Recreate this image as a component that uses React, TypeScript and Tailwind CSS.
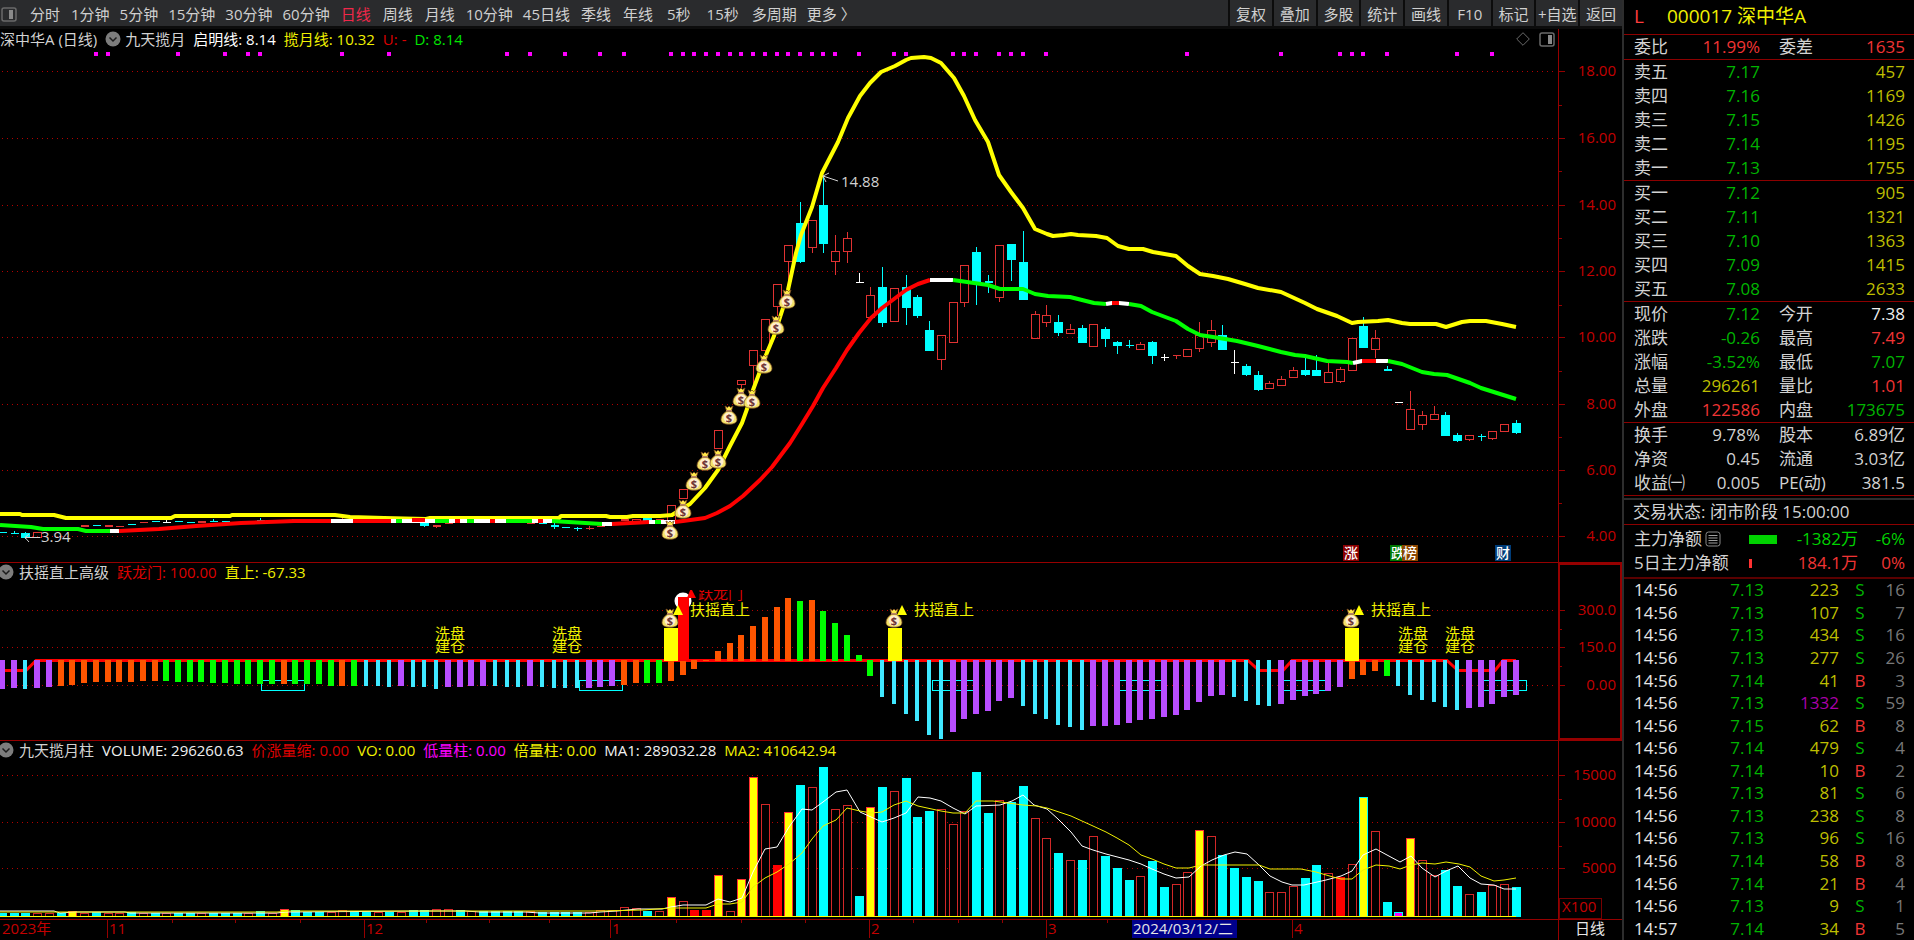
import type { ReactNode } from "react";

const STEP = 11.735;
const barX = (i: number) => Math.round(2 + i * STEP);

const periods = [
    "分时", "1分钟", "5分钟", "15分钟", "30分钟", "60分钟", "日线", "周线", "月线",
    "10分钟", "45日线", "季线", "年线", "5秒", "15秒", "多周期", "更多 〉",
];

const tools = ["复权", "叠加", "多股", "统计", "画线", "F10", "标记", "+自选", "返回"];

// kind: r = rising (hollow), c = falling (filled), w = unchanged
type Candle = [i: number, kind: string, top: number, bottom: number, high?: number, low?: number];

const candles: Candle[] = [
    [0, "c", 532, 533], [1, "c", 533, 534, 531], [2, "c", 533, 537, 532, 539], [3, "r", 532, 537],
    [6, "r", 527, 528], [7, "r", 525, 527], [8, "c", 525, 526], [9, "r", 525, 527], [10, "r", 526, 527],
    [11, "c", 524, 525], [12, "r", 522, 523], [13, "c", 521, 522], [14, "w", 522, 522, 519], [15, "c", 521, 522],
    [16, "c", 522, 523], [17, "r", 521, 523], [18, "c", 521, 522, 519], [19, "c", 521, 522], [22, "c", 520, 521, 518],
    [24, "r", 520, 521], [25, "c", 519, 520], [29, "r", 519, 520, 518], [36, "c", 522, 525, 521, 527],
    [37, "r", 525, 527, 525, 528], [38, "r", 523, 524], [45, "r", 523, 524], [46, "c", 523, 524], [47, "c", 525, 527, 523, 529],
    [48, "c", 527, 528], [49, "c", 528, 529, 527, 531], [50, "r", 528, 529, 526, 530], [51, "r", 526, 527],
    [52, "r", 522, 524], [53, "r", 519, 521], [54, "r", 519, 522], [55, "c", 518, 521], [56, "r", 519, 521],
    [57, "r", 505, 523], [58, "r", 489, 498], [61, "r", 430, 448], [63, "r", 380, 384, 380, 388],
    [64, "r", 350, 365, 350, 390], [65, "r", 319, 350, 319, 354], [66, "r", 284, 306, 284, 316],
    [67, "r", 245, 261, 245, 290], [68, "c", 223, 261, 202, 263], [69, "r", 220, 247, 220, 253],
    [70, "c", 205, 243, 177, 253], [71, "r", 251, 261, 235, 275], [72, "r", 238, 251, 232, 263],
    [73, "w", 282, 282, 273], [74, "r", 295, 317, 287], [75, "c", 287, 322, 267, 327], [76, "r", 288, 321],
    [77, "c", 287, 307, 275, 325], [78, "c", 297, 315, 295, 318], [79, "c", 330, 350, 321],
    [80, "r", 335, 359, 335, 370], [81, "r", 302, 342, 302, 343], [82, "r", 265, 302, 265, 307],
    [83, "c", 252, 281, 247, 305], [84, "c", 281, 283, 275, 293], [85, "r", 245, 297, 245, 302],
    [86, "c", 244, 259, 244, 281], [87, "c", 262, 299, 231], [88, "r", 314, 338, 311], [89, "r", 315, 322, 305, 327],
    [90, "c", 322, 332, 315, 336], [91, "r", 329, 333, 324], [92, "c", 328, 342, 325], [93, "r", 324, 346, 324, 347],
    [94, "c", 329, 338, 327, 347], [95, "c", 342, 345, 341, 354], [96, "c", 345, 346, 340, 348],
    [97, "r", 344, 349, 342], [98, "c", 342, 355, 341, 364], [99, "w", 357, 357, 354, 361], [100, "r", 355, 356, 355, 359],
    [101, "r", 349, 356], [102, "r", 335, 348, 322, 352], [103, "r", 330, 342, 320, 347], [104, "c", 335, 349, 325],
    [105, "w", 362, 362, 350, 374], [106, "c", 366, 374, 364, 376], [107, "c", 375, 389, 371, 391],
    [108, "r", 383, 388, 381], [109, "r", 379, 385, 376], [110, "r", 370, 377, 367], [111, "c", 370, 374, 358, 376],
    [112, "c", 370, 375, 355, 376], [113, "r", 372, 382, 363, 383], [114, "r", 369, 381, 367, 383], [115, "r", 338, 370],
    [116, "c", 326, 347, 317], [117, "r", 338, 349, 330, 358], [118, "c", 369, 371, 366], [119, "w", 402, 402],
    [120, "r", 409, 429, 391], [121, "r", 415, 424, 411, 430], [122, "r", 414, 419, 406], [123, "c", 415, 435, 412, 436],
    [124, "c", 435, 440, 433, 442], [125, "r", 435, 439, 435, 441], [126, "c", 436, 437, 434, 441],
    [127, "r", 431, 438, 431, 440], [128, "r", 424, 431, 424, 432], [129, "c", 423, 432, 420, 434],
];

const upperLine =
    "0,514 20,514 22,515 54,515 66,518 171,518 175,516 230,516 232,515 335,515 350,517 384,518 426,519 430,518 559,518 561,516 606,516 610,517 627,517 633,516 660,516 672,515 683,508 690,504 705,488 718,470 725,456 730,446 742,423 747,409 753,390 766,355 774,336 783,308 788,290 796,253 801,235 812,207 822,173 838,142 848,118 860,96 870,83 881,72 895,66 906,60 911,58 924,57 931,58 941,63 954,78 964,96 975,120 988,142 999,175 1011,192 1023,208 1035,229 1047,234 1053,236 1064,235 1071,234 1078,235 1096,236 1107,238 1118,246 1129,249 1143,249 1153,252 1176,256 1188,266 1200,274 1213,276 1228,279 1245,284 1258,288 1281,292 1305,303 1317,309 1337,316 1352,323 1358,322 1378,321 1388,320 1402,323 1410,324 1436,324 1446,327 1462,322 1470,321 1486,321 1502,324 1516,327";

const trend: [string, string][] = [
    ["#00ff00", "0,525 31,527 43,529 78,529 86,531 110,531"],
    ["#ffffff", "110,531 119,531"],
    ["#ff0000", "119,531 159,529 196,526 241,523 294,521 331,521"],
    ["#ffffff", "331,521 353,521"],
    ["#ff0000", "353,521 391,521"],
    ["#ffffff", "391,521 552,521"],
    ["#00ff00", "396,521 402,521"],
    ["#ff0000", "412,520 425,520"],
    ["#00ff00", "435,521 449,521"],
    ["#ff0000", "455,521 460,521"],
    ["#00ff00", "467,521 474,521"],
    ["#ff0000", "490,521 495,521"],
    ["#00ff00", "506,521 532,521"],
    ["#ff0000", "538,521 543,521"],
    ["#00ff00", "552,521 602,524"],
    ["#ffffff", "602,524 612,524"],
    ["#ff0000", "612,524 649,522"],
    ["#ffffff", "649,522 675,522"],
    ["#00ff00", "655,522 661,522"],
    ["#ff0000", "675,522 683,521 705,518 717,513 730,506 743,496 760,480 772,467 790,443 802,424 813,406 823,388 836,368 847,350 859,333 871,318 882,308 894,299 906,290 918,284 930,280"],
    ["#ffffff", "930,280 953,280"],
    ["#00ff00", "953,280 967,282 988,285 1000,289 1023,289 1035,294 1048,296 1070,297 1094,303 1106,304"],
    ["#ffffff", "1106,304 1112,303 1119,303 1129,304"],
    ["#ff0000", "1112,303 1119,303"],
    ["#00ff00", "1129,304 1141,306 1152,312 1176,321 1188,329 1200,335 1213,337 1237,341 1258,346 1281,352 1295,355 1305,356 1327,361 1347,362 1353,363"],
    ["#ffffff", "1353,363 1362,361 1388,361"],
    ["#ff0000", "1362,361 1376,361"],
    ["#00ff00", "1388,361 1402,364 1422,372 1434,374 1447,375 1470,383 1481,388 1516,399"],
];

const signalDots = [
    8, 9, 15, 19, 21, 22, 29, 33, 43, 45, 48, 51, 53, 57, 58, 59, 60, 61, 62, 63, 64, 65, 66, 67, 68, 69, 70, 71,
    73, 76, 77, 81, 82, 83, 85, 86, 87, 89, 101, 109, 114, 115, 116, 118, 124, 127,
];

const bags: [number, number][] = [
    [670, 530], [683, 509], [694, 481], [705, 461], [718, 459], [729, 415], [741, 397], [752, 399], [764, 364], [776, 325], [787, 299],
];

const badges: [number, string, string][] = [
    [1343, "涨", "#8b0000"], [1390, "跌", "#007800"], [1402, "榜", "#8c4600"], [1495, "财", "#003c78"],
];

// one entry per bar: colour letter + y of the free end
const momentum =
    "P689 P688 C689 P688 P687 O686 O685 O683 O682 O682 O682 O682 O681 O681 G681 G682 G682 G682 G683 G683 G684 G684 G684 G684 O684 G684 G684 G684 G686 O686 G686 C686 C686 C687 P686 C687 C687 C689 P687 P687 P686 P686 C686 C687 C687 P686 C687 C688 C688 C688 P688 P687 P686 O685 O683 G683 G683 O681 O675 O669 O660 O651 O643 O635 O626 O617 O607 O598 G601 O600 G611 G623 G635 G655 G676 C697 C704 C714 C721 C735 C739 P732 P719 P714 P711 P701 P698 C706 C714 C719 C725 C727 C730 P726 P726 P725 P723 P720 P719 P717 P715 P710 P702 P696 P695 C697 C701 C705 C706 P704 P700 P696 P694 P691 P687 O679 O675 O671 G676 C686 C695 C700 C702 C707 C710 P708 P707 P704 P697 P695".split(" ");

const momentumColor: Record<string, string> = { P: "#b84dff", C: "#40e8ff", O: "#ff5500", G: "#00ff00" };

const volumes =
    "C913 C913 C913 H913 H913 C913 Y911 H913 C912 H913 H913 C912 H913 C913 H913 C913 C913 H913 C913 C913 C913 H913 C911 H913 Y909 C910 C912 C912 H912 H910 C912 C912 H912 C912 H912 C910 C910 H909 H909 C910 H911 C911 C911 C911 C911 H911 C912 C912 C912 C912 H912 H910 H910 H907 H908 C911 H911 Y897 H901 R910 R910 Y875 H911 Y879 Y777 H804 R865 Y812 C785 H787 C767 H809 H805 C896 Y807 C787 H791 C778 C817 C811 H809 H824 H811 C772 C813 H800 C802 C786 H818 H838 C853 H860 C860 H836 C856 C868 C880 H876 C861 C887 H884 H872 Y830 H836 C855 C868 C877 C881 H892 H892 H886 C878 C865 H873 R877 H864 Z797 H831 C902 M912 Y838 H860 H875 C870 C886 H894 C892 H885 H884 C887".split(" ");

const volumeStyle: Record<string, [string, string]> = {
    C: ["#00ffff", "#00ffff"],
    H: ["#000000", "#d22828"],
    Y: ["#ffff00", "#ff3232"],
    Z: ["#ffff00", "#00ffff"],
    R: ["#ff0000", "#ff0000"],
    M: ["#ff00ff", "#00ffff"],
};

const ma1 =
    "0,911 54,911 60,913 75,912 100,912 125,912 130,913 277,913 285,912 430,911 465,911 480,912 500,912 525,912 540,913 590,913 600,912 617,911 638,909 662,909 671,907 683,905 706,905 718,899 730,902 742,898 753,872 765,849 777,847 789,827 802,809 812,810 823,802 836,792 847,790 860,812 871,817 882,822 894,818 906,813 918,797 930,798 941,801 953,808 965,814 976,806 1000,805 1012,801 1023,795 1034,805 1047,809 1058,819 1071,832 1082,846 1093,850 1106,854 1129,860 1141,864 1152,869 1164,874 1176,878 1189,877 1201,866 1212,860 1224,855 1235,852 1247,854 1259,865 1270,876 1282,882 1292,885 1304,885 1326,880 1341,876 1352,871 1363,855 1376,849 1387,855 1400,862 1411,856 1422,868 1435,877 1446,871 1458,866 1470,878 1481,884 1494,885 1504,889 1516,889";

const ma2 =
    "0,912 277,912 290,911 600,911 643,910 671,908 706,908 718,904 730,904 742,902 753,887 765,878 777,872 789,864 802,853 812,839 823,826 836,820 847,808 860,811 871,813 882,812 894,805 906,801 918,806 941,811 953,813 965,813 976,801 993,801 1023,805 1037,806 1047,808 1071,816 1093,826 1106,832 1117,838 1129,845 1141,855 1152,859 1164,864 1176,868 1189,868 1201,865 1259,865 1270,869 1301,869 1316,872 1333,877 1341,879 1352,879 1363,870 1376,865 1389,866 1400,869 1411,865 1422,863 1435,864 1446,862 1459,864 1470,867 1481,876 1494,881 1504,880 1516,878";

const GREEN = "text-[#00b400]";
const RED = "text-[#f03434]";
const YELLOW = "text-[#bebe00]";
const WHITE = "text-[#f0f0f0]";
const LIGHT = "text-[#d2d2d2]";

type Quote = [label: string, value: string, tone: string, label2: string, value2: string, tone2: string];

const quoteBlocks: Quote[][] = [
    [["委比", "11.99%", RED, "委差", "1635", RED]],
    [
        ["卖五", "7.17", GREEN, "", "457", YELLOW],
        ["卖四", "7.16", GREEN, "", "1169", YELLOW],
        ["卖三", "7.15", GREEN, "", "1426", YELLOW],
        ["卖二", "7.14", GREEN, "", "1195", YELLOW],
        ["卖一", "7.13", GREEN, "", "1755", YELLOW],
    ],
    [
        ["买一", "7.12", GREEN, "", "905", YELLOW],
        ["买二", "7.11", GREEN, "", "1321", YELLOW],
        ["买三", "7.10", GREEN, "", "1363", YELLOW],
        ["买四", "7.09", GREEN, "", "1415", YELLOW],
        ["买五", "7.08", GREEN, "", "2633", YELLOW],
    ],
    [
        ["现价", "7.12", GREEN, "今开", "7.38", WHITE],
        ["涨跌", "-0.26", GREEN, "最高", "7.49", RED],
        ["涨幅", "-3.52%", GREEN, "最低", "7.07", GREEN],
        ["总量", "296261", YELLOW, "量比", "1.01", RED],
        ["外盘", "122586", RED, "内盘", "173675", GREEN],
    ],
    [
        ["换手", "9.78%", LIGHT, "股本", "6.89亿", LIGHT],
        ["净资", "0.45", LIGHT, "流通", "3.03亿", LIGHT],
        ["收益㈠", "0.005", LIGHT, "PE(动)", "381.5", LIGHT],
    ],
];

const ticks: [string, string, string, string, string][] = [
    ["14:56", "7.13", "223", "S", "16"],
    ["14:56", "7.13", "107", "S", "7"],
    ["14:56", "7.13", "434", "S", "16"],
    ["14:56", "7.13", "277", "S", "26"],
    ["14:56", "7.14", "41", "B", "3"],
    ["14:56", "7.13", "1332", "S", "59"],
    ["14:56", "7.15", "62", "B", "8"],
    ["14:56", "7.14", "479", "S", "4"],
    ["14:56", "7.14", "10", "B", "2"],
    ["14:56", "7.13", "81", "S", "6"],
    ["14:56", "7.13", "238", "S", "8"],
    ["14:56", "7.13", "96", "S", "16"],
    ["14:56", "7.14", "58", "B", "8"],
    ["14:56", "7.14", "21", "B", "4"],
    ["14:56", "7.13", "9", "S", "1"],
    ["14:57", "7.14", "34", "B", "5"],
];

function PanelIcon({ right = false }: { right?: boolean }) {
    return (
        <svg width="16" height="15" viewBox="0 0 16 15" className="shrink-0" aria-hidden="true">
            <rect x="1" y="1" width="14" height="13" rx="2" fill="none" stroke="#6a6a6a" strokeWidth="1.5" />
            <rect x={right ? 9 : 8} y="3" width="4" height="9" fill="#8a8a8a" />
        </svg>
    );
}

function Toolbar() {
    return (
        <header className="flex h-[29px] shrink-0 border-b-[3px] border-[#0c0c0c] bg-[#2a2b2d] text-[15px] leading-none text-[#d0d0d0]">
            <div className="flex flex-1 items-center overflow-hidden pl-px pt-[2px]">
                <PanelIcon />
                <nav className="ml-[7px] flex whitespace-nowrap">
                    {periods.map((p) => (
                        <button
                            key={p}
                            type="button"
                            className={`${p.endsWith("秒") ? "px-2" : p.length === 2 ? "px-[6px]" : "px-[5px]"} ${p === "日线" ? "text-[#f0284a]" : ""}`}>
                            {p}
                        </button>
                    ))}
                </nav>
            </div>
            <div className="grid w-[394px] grid-cols-9">
                {tools.map((t) => (
                    <button key={t} type="button" className="overflow-hidden whitespace-nowrap border-l-2 border-[#0c0c0c] pt-[2px]">
                        {t}
                    </button>
                ))}
            </div>
        </header>
    );
}

function Collapse() {
    return (
        <button type="button" aria-label="指标菜单" className="shrink-0">
            <svg width="16" height="16" viewBox="0 0 16 16" aria-hidden="true">
                <circle cx="8" cy="8" r="7.5" fill="#7d7d7d" />
                <path d="M4.5 6.5 L8 10 L11.5 6.5" fill="none" stroke="#1c1c1c" strokeWidth="1.5" />
            </svg>
        </button>
    );
}

// Legend and drawing share one grid cell, so the legend sits on top of the chart
function Panel({ viewBox, legend, children }: { viewBox: string, legend: ReactNode, children: ReactNode }) {
    return (
        <section className="grid min-h-0 grid-cols-1 grid-rows-1">
            <svg viewBox={viewBox} preserveAspectRatio="xMinYMin meet" className="col-start-1 row-start-1 h-full min-h-0 w-full" fontSize="15">
                {children}
            </svg>
            <div className="z-10 col-start-1 row-start-1 flex h-5 items-center gap-2 self-start whitespace-nowrap text-[15px] leading-5">
                {legend}
            </div>
        </section>
    );
}

function Axis({ ys, minor, labels }: { ys: number[], minor: number[], labels: string[] }) {
    return (
        <g>
            {ys.map((y, n) => (
                <g key={y}>
                    <path d={`M2 ${y + 0.5} H1556`} stroke="#b40000" strokeDasharray="1 4" shapeRendering="crispEdges" />
                    <path d={`M1559 ${y + 0.5} h6`} stroke="#960000" shapeRendering="crispEdges" />
                    <text x="1616" y={y + 5} textAnchor="end" fill="#c30000">{labels[n]}</text>
                </g>
            ))}
            {minor.map((y) => (
                <path key={y} d={`M1559 ${y + 0.5} h3`} stroke="#960000" shapeRendering="crispEdges" />
            ))}
        </g>
    );
}

function MoneyBag({ x, y }: { x: number, y: number }) {
    return (
        <g transform={`translate(${x} ${y})`}>
            <path d="M-4 -9 L-1.5 -7.5 L0 -9 L1.5 -7.5 L4 -9 L2.5 -4.5 H-2.5 Z" fill="#ffe94a" stroke="#7a4a20" strokeWidth="0.8" />
            <path d="M-2.5 -3.8 C-6 -1.5 -8 1.5 -8 4.2 C-8 7.8 -5 9.2 0 9.2 C5 9.2 8 7.8 8 4.2 C8 1.5 6 -1.5 2.5 -3.8 Z" fill="#f3e36a" stroke="#7a4a20" strokeWidth="0.8" />
            <ellipse cx="0" cy="2.5" rx="5.5" ry="5.2" fill="#ffeccd" />
            <path d="M-3 -4.2 H3" stroke="#c08a6a" strokeWidth="1.4" />
            <text x="0" y="6.5" textAnchor="middle" fontSize="11" fontWeight="700" fill="#6e3434">$</text>
        </g>
    );
}

function CandleShape({ candle }: { candle: Candle }) {
    const [i, kind, top, bottom, high = top, low = bottom] = candle;
    const x = barX(i);
    const color = kind === "c" ? "#00ffff" : kind === "w" ? "#ffffff" : "#e03232";
    const flat = bottom - top < 3;
    return (
        <g stroke={color} shapeRendering="crispEdges">
            {high < top && <path d={`M${x + 0.5} ${high} V${top}`} />}
            {low > bottom && <path d={`M${x + 0.5} ${bottom} V${low}`} />}
            {flat
                ? <rect x={x - 3} y={top} width="8" height={Math.max(bottom - top, 1)} fill={color} stroke="none" />
                : <rect x={x - 3.5} y={top + 0.5} width="8" height={bottom - top} fill={kind === "r" ? "none" : color} />}
        </g>
    );
}

function PricePanel() {
    return (
        <Panel
            viewBox="0 29 1622 533"
            legend={
                <>
                    <span className="text-[#d2d2d2]">深中华A (日线)</span>
                    <span className="flex items-center gap-1 text-[#d2d2d2]"><Collapse />九天揽月</span>
                    <span className="text-white">启明线: 8.14</span>
                    <span className="text-[#f0f000]">揽月线: 10.32</span>
                    <span className="text-[#dc0000]">U: -</span>
                    <span className="text-[#00e600]">D: 8.14</span>
                    <span className="ml-auto mr-[67px] flex items-center gap-[9px]">
                        <svg width="14" height="14" viewBox="0 0 14 14" aria-hidden="true">
                            <path d="M7 0.7 L13.3 7 L7 13.3 L0.7 7 Z" fill="none" stroke="#6a6a6a" />
                        </svg>
                        <PanelIcon right />
                    </span>
                </>
            }>
            <Axis
                ys={[71, 138, 205, 271, 337, 404, 470, 536]}
                minor={[105, 171, 238, 305, 371, 437, 503]}
                labels={["18.00", "16.00", "14.00", "12.00", "10.00", "8.00", "6.00", "4.00"]} />
            <path d="M1558.5 29 V562" stroke="#960000" shapeRendering="crispEdges" />
            {signalDots.map((i) => (
                <rect key={i} x={barX(i) - 2} y="52" width="4" height="4" fill="#ff00ff" />
            ))}
            {candles.map((c) => <CandleShape key={c[0]} candle={c} />)}
            <polyline points={upperLine} fill="none" stroke="#ffff00" strokeWidth="4" strokeLinejoin="round" />
            {trend.map(([color, points]) => (
                <polyline key={points} points={points} fill="none" stroke={color} strokeWidth="4" strokeLinejoin="round" />
            ))}
            {bags.map(([x, y]) => <MoneyBag key={x} x={x} y={y} />)}
            <path d="M838 181 L823 176 M829 173 L823 176 L826 182" fill="none" stroke="#d2d2d2" />
            <text x="841" y="187" fill="#d2d2d2">14.88</text>
            <path d="M40 537.5 H25 M29 534 L25 537.5 L29 542" fill="none" stroke="#d2d2d2" />
            <text x="41" y="542" fill="#d2d2d2">3.94</text>
            {badges.map(([x, label, color]) => (
                <g key={label}>
                    <rect x={x} y="545" width="16" height="16" fill={color} />
                    <text x={x + 1} y="558" fontSize="14" fontWeight="500" fill="#ffffff">{label}</text>
                </g>
            ))}
        </Panel>
    );
}

function MomentumPanel() {
    return (
        <Panel
            viewBox="0 562 1622 178"
            legend={
                <>
                    <span className="-ml-[2px] flex items-center gap-[5px] text-[#d2d2d2]"><Collapse />扶摇直上高级</span>
                    <span className="text-[#dc0000]">跃龙门: 100.00</span>
                    <span className="text-[#f0f000]">直上: -67.33</span>
                </>
            }>
            <clipPath id="panelTop"><rect x="0" y="590" width="1558" height="150" /></clipPath>
            <Axis ys={[610, 647, 685]} minor={[629, 666]} labels={["300.0", "150.0", "0.00"]} />
            <path d="M0 562.5 H1622" stroke="#960000" shapeRendering="crispEdges" />
            <rect x="1559" y="564" width="62" height="175" fill="none" stroke="#960000" strokeWidth="2" shapeRendering="crispEdges" />
            <path
                d="M0 670.5 H26 L36 660.5 H1248 L1259 670.5 H1283 L1292 660.5 H1447 L1458 670.5 H1495 L1503 660.5 H1516"
                fill="none" stroke="#ff0000" strokeWidth="3" />
            {[261, 579, 932, 1118, 1283, 1483].map((x) => (
                <rect key={x} x={x + 0.5} y="680.5" width="43" height="10" fill="none" stroke="#00ffff" shapeRendering="crispEdges" />
            ))}
            {momentum.map((bar, i) => {
                const end = Number(bar.slice(1));
                const w = bar[0] === "C" ? 4 : 6;
                return (
                    <rect
                        key={i} x={barX(i) - w / 2} y={Math.min(end, 660)} width={w} height={Math.abs(end - 660) + (end <= 660 ? 1 : 0)}
                        fill={momentumColor[bar[0]]} shapeRendering="crispEdges" />
                );
            })}
            <circle cx="683" cy="601" r="8.5" fill="#ffffff" />
            <rect x="678" y="597" width="11" height="64" fill="#ff0000" />
            <g clipPath="url(#panelTop)" fill="#dc0000">
                <path d="M691 588 L696 598 H687 Z" fill="#ff0000" />
                <text x="698" y="599">跃龙门</text>
            </g>
            {[664, 888, 1345].map((x) => (
                <g key={x}>
                    <rect x={x} y="628" width="14" height="33" fill="#ffff00" />
                    <MoneyBag x={x + 6} y={618} />
                    <path d={`M${x + 14} 605 L${x + 19} 615 H${x + 9} Z`} fill="#ffff00" />
                    <text x={x + 26} y="615" fill="#f0f000">扶摇直上</text>
                </g>
            ))}
            {[435, 552, 1398, 1445].map((x) => (
                <text key={x} fill="#f0f000">
                    <tspan x={x} y="639">洗盘</tspan>
                    <tspan x={x} y="652">建仓</tspan>
                </text>
            ))}
        </Panel>
    );
}

function VolumePanel() {
    const months: [number, string][] = [[107, "11"], [364, "12"], [610, "1"], [869, "2"], [1046, "3"], [1292, "4"]];
    return (
        <Panel
            viewBox="0 740 1622 200"
            legend={
                <>
                    <span className="-ml-[2px] flex items-center gap-[5px] text-[#d2d2d2]"><Collapse />九天揽月柱</span>
                    <span className="text-[#f0f0f0]">VOLUME: 296260.63</span>
                    <span className="text-[#dc0000]">价涨量缩: 0.00</span>
                    <span className="text-[#f0f000]">VO: 0.00</span>
                    <span className="text-[#ff00ff]">低量柱: 0.00</span>
                    <span className="text-[#f0f000]">倍量柱: 0.00</span>
                    <span className="text-[#f0f0f0]">MA1: 289032.28</span>
                    <span className="text-[#f0f000]">MA2: 410642.94</span>
                </>
            }>
            <Axis ys={[775, 822, 868]} minor={[799, 846]} labels={["15000", "10000", "5000"]} />
            <path d="M0 740.5 H1622 M1558.5 740 V940 M0 919.5 H1622" stroke="#960000" shapeRendering="crispEdges" />
            {volumes.map((bar, i) => {
                const top = Number(bar.slice(1));
                const [fill, stroke] = volumeStyle[bar[0]];
                return (
                    <rect
                        key={i} x={barX(i) - 3.5} y={top + 0.5} width="8" height={916 - top}
                        fill={fill} stroke={stroke} shapeRendering="crispEdges" />
                );
            })}
            <path d="M0 916.5 H1516" stroke="#ffff00" shapeRendering="crispEdges" />
            <polyline points={ma1} fill="none" stroke="#ffffff" />
            <polyline points={ma2} fill="none" stroke="#f0f000" />
            <rect x="1559.5" y="898.5" width="42" height="20" fill="none" stroke="#780000" shapeRendering="crispEdges" />
            <text x="1562" y="912" fill="#c30000">X100</text>
            <g fill="#c30000">
                <text x="2" y="934">2023年</text>
                {months.map(([x, label]) => (
                    <g key={label}>
                        <path d={`M${x + 0.5} 920 V938`} stroke="#960000" shapeRendering="crispEdges" />
                        <text x={x + 2} y="934">{label}</text>
                    </g>
                ))}
                {[172, 235, 300, 426, 489, 549, 676, 741, 805, 913, 958, 1002, 1107].map((x) => (
                    <path key={x} d={`M${x + 0.5} 920 v3`} stroke="#960000" shapeRendering="crispEdges" />
                ))}
            </g>
            <rect x="1132" y="920" width="105" height="18" fill="#00008c" />
            <text x="1133" y="934" fill="#e6e6e6">2024/03/12/二</text>
            <text x="1575" y="934" fill="#e6e6e6">日线</text>
        </Panel>
    );
}

function QuoteTable({ rows }: { rows: Quote[] }) {
    return (
        <table className="w-full table-fixed border-b border-[#8c0000]">
            <tbody>
                {rows.map(([label, value, tone, label2, value2, tone2]) => (
                    <tr key={label} className="h-6">
                        <th scope="row" className="w-[76px] p-0 pl-[10px] text-left font-normal text-[#d2d2d2]">{label}</th>
                        <td className={`w-[60px] p-0 text-right ${tone}`}>{value}</td>
                        <th scope="row" className="w-[80px] p-0 pl-[19px] text-left font-normal text-[#d2d2d2]">{label2}</th>
                        <td className={`p-0 pr-[9px] text-right ${tone2}`}>{value2}</td>
                    </tr>
                ))}
            </tbody>
        </table>
    );
}

function Sidebar() {
    return (
        <aside className="flex w-[292px] shrink-0 flex-col overflow-hidden border-l-2 border-[#2d2d2d] text-[17px] leading-6 whitespace-nowrap">
            <h1 className="flex h-[35px] shrink-0 items-center border-b border-[#8c0000] pb-[2px] pl-[10px] text-[19px] text-[#f0f000]">
                <span className="w-[33px] text-[#ff3c3c]">L</span>
                000017 深中华A
            </h1>
            {quoteBlocks.map((rows) => <QuoteTable key={rows[0][0]} rows={rows} />)}
            <p className="mt-[2px] h-[27px] shrink-0 border-b border-t-2 border-b-[#8c0000] border-t-[#2d2d2d] pl-[9px] text-[#d2d2d2]">
                交易状态: 闭市阶段 15:00:00
            </p>
            <div className="border-b-2 border-[#5a0000] py-[2px]">
                <table className="w-full table-fixed">
                    <tbody>
                        <tr className="h-6 text-[#00d200]">
                            <th scope="row" className="w-[125px] p-0 pl-[10px] text-left font-normal text-[#d2d2d2]">
                                <span className="flex items-center gap-[3px]">
                                    主力净额
                                    <svg width="16" height="16" viewBox="0 0 16 16" aria-hidden="true">
                                        <rect x="1" y="1" width="14" height="14" rx="2.5" fill="none" stroke="#8a8a8a" />
                                        <path d="M3.5 4.5 H12.5 M3.5 7 H12.5 M3.5 9.5 H12.5 M3.5 12 H12.5" stroke="#a0a0a0" />
                                    </svg>
                                </span>
                            </th>
                            <td className="w-[29px] p-0"><div className="h-[9px] w-7 bg-[#00d200]" /></td>
                            <td className="w-[80px] p-0 text-right">-1382万</td>
                            <td className="p-0 pr-[9px] text-right">-6%</td>
                        </tr>
                        <tr className="h-6 text-[#f03434]">
                            <th scope="row" className="p-0 pl-[10px] text-left font-normal text-[#d2d2d2]">5日主力净额</th>
                            <td className="p-0"><div className="h-[9px] w-[3px] bg-[#ff3232]" /></td>
                            <td className="p-0 text-right">184.1万</td>
                            <td className="p-0 pr-[9px] text-right">0%</td>
                        </tr>
                    </tbody>
                </table>
            </div>
            <table className="w-full flex-1 table-fixed leading-[22px]">
                <tbody>
                    {ticks.map(([time, price, volume, side, count], n) => (
                        <tr key={n}>
                            <td className="w-[76px] p-0 pl-[10px] text-[#e6e6e6]">{time}</td>
                            <td className="w-[64px] p-0 text-right text-[#00b400]">{price}</td>
                            <td className={`w-[75px] p-0 text-right ${Number(volume) > 1000 ? "text-[#aa00aa]" : "text-[#bebe00]"}`}>{volume}</td>
                            <td className={`w-[42px] p-0 text-center ${side === "S" ? GREEN : RED}`}>{side}</td>
                            <td className="p-0 pr-[9px] text-right text-[#787878]">{count}</td>
                        </tr>
                    ))}
                </tbody>
            </table>
        </aside>
    );
}

export default function App() {
    return (
        <div className="flex h-screen bg-black font-['Open_Sans','Noto_Sans_CJK_SC',sans-serif]">
            <main className="flex min-w-0 flex-1 flex-col">
                <Toolbar />
                <div className="grid min-h-0 flex-1 grid-cols-1 grid-rows-[533fr_178fr_200fr]">
                    <PricePanel />
                    <MomentumPanel />
                    <VolumePanel />
                </div>
            </main>
            <Sidebar />
        </div>
    );
}
